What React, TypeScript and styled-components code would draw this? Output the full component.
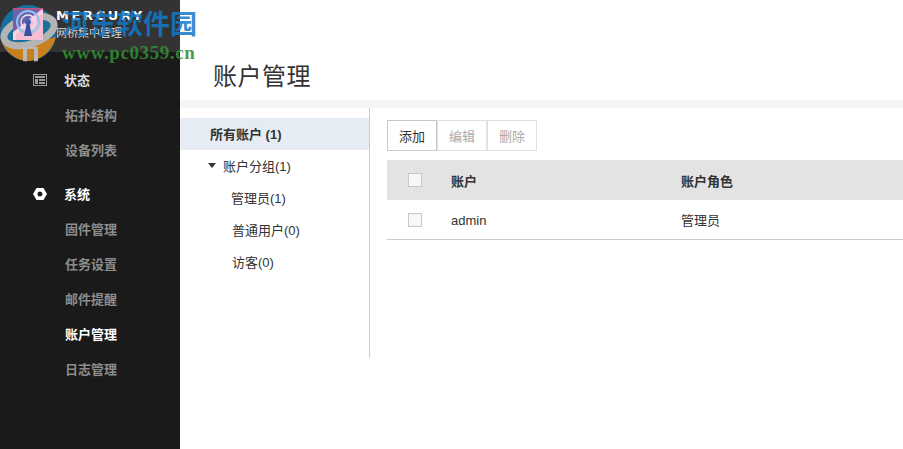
import React from "react";
import styled, { createGlobalStyle } from "styled-components";

const Global = createGlobalStyle`
  html, body { margin: 0; padding: 0; height: 100%; background: #fff; overflow: hidden; }
  #root { height: 100%; }
  * { box-sizing: border-box; }
`;
const FONT = `"Liberation Sans", Arial, "Noto Sans CJK SC", sans-serif`;

const Page = styled.div`
  position: relative; display: flex; width: 903px; height: 449px; overflow: hidden;
  font-family: ${FONT}; font-size: 13px; color: #333;
`;
const Sidebar = styled.aside`
  width: 180px; flex: none; background: #1a1a1a; display: flex; flex-direction: column;
`;
const Brand = styled.div`
  height: 52px; background: #333; padding: 9px 0 0 56px; color: #fff;
`;
const BrandName = styled.div`
  font-family: "DejaVu Sans", sans-serif; font-size: 13px; font-weight: 700; line-height: 14px; letter-spacing: 2.6px;
`;
const BrandSub = styled.div`
  font-size: 11px; line-height: 14px; color: #ddd; margin-top: 3px;
`;
const Nav = styled.nav`
  display: flex; flex-direction: column; padding-top: 11px;
`;
const NavGroup = styled.div<{ $gap?: number }>`
  display: flex; flex-direction: column; margin-top: ${p => p.$gap ?? 0}px;
`;
const NavItem = styled.div<{ $tone: "head" | "dim" | "white" }>`
  height: 35px; display: flex; align-items: center; gap: 17px; padding-bottom: 2px;
  padding-left: ${p => (p.$tone === "head" ? 33 : 65)}px;
  font-size: 13px; font-weight: 700;
  color: ${p => p.$tone === "dim" ? "#8c8c8c" : p.$tone === "white" ? "#fff" : "#dcdcdc"};
`;
const NavHead = styled(NavItem)<{ $bright?: boolean }>`
  color: ${p => p.$bright ? "#fff" : "#dcdcdc"};
`;
const Main = styled.main`
  flex: 1; display: flex; flex-direction: column; min-width: 0;
`;
const Title = styled.h1`
  margin: 0; height: 100px; padding: 61px 0 0 33px; font-size: 24px; line-height: 32px; font-weight: 400; color: #333;
  letter-spacing: .5px;
`;
const Divider = styled.div`
  height: 8px; background: #f5f5f5;
`;
const Body = styled.div`
  display: flex; align-items: flex-start;
`;
const Tree = styled.div`
  width: 190px; height: 250px; flex: none; border-right: 1px solid #ccc; padding-top: 10px;
`;
const TreeRow = styled.div<{ $indent: number; $active?: boolean }>`
  height: 32px; display: flex; align-items: center; padding-left: ${p => p.$indent}px; padding-bottom: 2px;
  font-size: 13px; color: #333; font-weight: ${p => p.$active ? 700 : 400};
  background: ${p => p.$active ? "#e5ecf3" : "transparent"};
  white-space: pre;
`;
const Caret = styled.span`
  width: 0; height: 0; border-left: 4px solid transparent; border-right: 4px solid transparent;
  border-top: 5px solid #333; margin-right: 7px;
`;
const Content = styled.section`
  flex: 1; padding: 12px 0 0 17px; min-width: 0;
`;
const Toolbar = styled.div`
  display: flex; height: 31px;
`;
const Btn = styled.button<{ $on?: boolean }>`
  width: 50px; height: 31px; padding: 0; background: #fff; font-family: ${FONT}; font-size: 13px;
  border: 1px solid ${p => p.$on ? "#c8c8c8" : "#e0e0e0"}; color: ${p => p.$on ? "#333" : "#aaa"};
`;
const Table = styled.div`
  margin-top: 9px;
`;
const Row = styled.div<{ $head?: boolean }>`
  display: grid; grid-template-columns: 64px 230px 1fr; align-items: center;
  height: 40px;
  background: ${p => p.$head ? "#e3e3e3" : "#fff"};
  font-weight: ${p => p.$head ? 700 : 400};
  border-bottom: ${p => p.$head ? "none" : "1px solid #ccc"};
  font-size: 13px; color: #333;
`;
const CheckCell = styled.div`
  display: flex; padding-left: 21px;
`;
const Check = styled.span`
  width: 14px; height: 14px; background: #f7f7f7; border: 1px solid #c8c8c8;
`;
const LatinCell = styled.span`
  padding-top: 2px;
`;
const Watermark = styled.div`
  position: absolute; left: 0; top: 0; width: 210px; height: 66px; pointer-events: none;
`;
const WmSvg = styled.svg`
  position: absolute; left: 0; top: 0;
`;
const WmCn = styled.div`
  position: absolute; left: 62px; top: 9px; font-family: "Liberation Serif", "Noto Sans CJK SC", serif;
  font-size: 27px; line-height: 32px; font-weight: 700; color: rgba(20, 120, 200, .85); white-space: nowrap;
`;
const WmUrl = styled.div`
  position: absolute; left: 62px; top: 43px; font-family: "Liberation Serif", serif;
  font-size: 19px; line-height: 20px; font-weight: 700; color: rgba(50, 140, 50, .9); white-space: nowrap; letter-spacing: .6px;
`;

const TableIcon = () => (
  <svg width="14" height="12" viewBox="0 0 14 12" fill="none">
    <rect x=".5" y=".5" width="13" height="11" stroke="#999" />
    <rect x="2" y="2" width="10" height="2" fill="#999" />
    <rect x="2" y="5" width="3" height="5" fill="#999" />
    <rect x="6" y="5" width="6" height="2" fill="#999" />
    <rect x="6" y="8" width="6" height="2" fill="#999" />
  </svg>
);
const NutIcon = () => (
  <svg width="14" height="14" viewBox="0 0 14 14">
    <path fillRule="evenodd" fill="#fff" d="M3.5 1h7L14 7l-3.500 6h-7L0 7zM7 4.500a2.500 2.500 0 1 0 0 5a2.500 2.500 0 0 0 0-5z" />
  </svg>
);
const LogoMark = () => (
  <WmSvg width="62" height="64" viewBox="0 0 62 64">
    <circle cx="28" cy="33" r="28" fill="#17719f" />
    <path d="M1 40c4 12 15 21 27 21s24-9 28-24L30 44z" fill="#c87f1e" />
    <ellipse cx="29" cy="31" rx="26" ry="13" transform="rotate(-18 29 31)" fill="none" stroke="#b4b4b4" strokeWidth="7" />
    <path d="M23 47h15v14l-4 .5V49h-7v12.500l-4-.5z" fill="#b9b9b9" />
    <path d="M13 8h30v32H13z" fill="#f7bdd2" />
    <path d="M13 8h30L13 32z" fill="#6f62ad" />
    <path d="M13 33L43 10v3L16 34v6h-3z" fill="#f9d3e0" />
    <path d="M13 8h30v1.500H13z" fill="#c4507f" />
    <circle cx="28" cy="22" r="11" fill="none" stroke="#8ec4f0" strokeWidth="2" />
    <circle cx="28" cy="22" r="7" fill="none" stroke="#e8e4f4" strokeWidth="1.500" />
    <circle cx="28" cy="22" r="3" fill="#3a62b8" />
    <path d="M27 22h2l3 14h-8z" fill="#3a4fa0" />
  </WmSvg>
);

export default function App() {
  return (
    <Page>
      <Global />
      <Sidebar>
        <Brand>
          <BrandName>MERCURY</BrandName>
          <BrandSub>网桥集中管理</BrandSub>
        </Brand>
        <Nav>
          <NavGroup>
            <NavHead $tone="head"><TableIcon /><span>状态</span></NavHead>
            <NavItem $tone="dim">拓扑结构</NavItem>
            <NavItem $tone="dim">设备列表</NavItem>
          </NavGroup>
          <NavGroup $gap={9}>
            <NavHead $tone="head" $bright><NutIcon /><span>系统</span></NavHead>
            <NavItem $tone="dim">固件管理</NavItem>
            <NavItem $tone="dim">任务设置</NavItem>
            <NavItem $tone="dim">邮件提醒</NavItem>
            <NavItem $tone="white">账户管理</NavItem>
            <NavItem $tone="dim">日志管理</NavItem>
          </NavGroup>
        </Nav>
      </Sidebar>
      <Main>
        <Title>账户管理</Title>
        <Divider />
        <Body>
          <Tree>
            <TreeRow $indent={30} $active>所有账户 (1)</TreeRow>
            <TreeRow $indent={28}><Caret />账户分组(1)</TreeRow>
            <TreeRow $indent={51}>管理员(1)</TreeRow>
            <TreeRow $indent={52}>普通用户(0)</TreeRow>
            <TreeRow $indent={52}>访客(0)</TreeRow>
          </Tree>
          <Content>
            <Toolbar>
              <Btn $on>添加</Btn>
              <Btn>编辑</Btn>
              <Btn>删除</Btn>
            </Toolbar>
            <Table>
              <Row $head>
                <CheckCell><Check /></CheckCell>
                <span>账户</span>
                <span>账户角色</span>
              </Row>
              <Row>
                <CheckCell><Check /></CheckCell>
                <LatinCell>admin</LatinCell>
                <span>管理员</span>
              </Row>
            </Table>
          </Content>
        </Body>
      </Main>
      <Watermark>
        <LogoMark />
        <WmCn>河东软件园</WmCn>
        <WmUrl>www.pc0359.cn</WmUrl>
      </Watermark>
    </Page>
  );
}
